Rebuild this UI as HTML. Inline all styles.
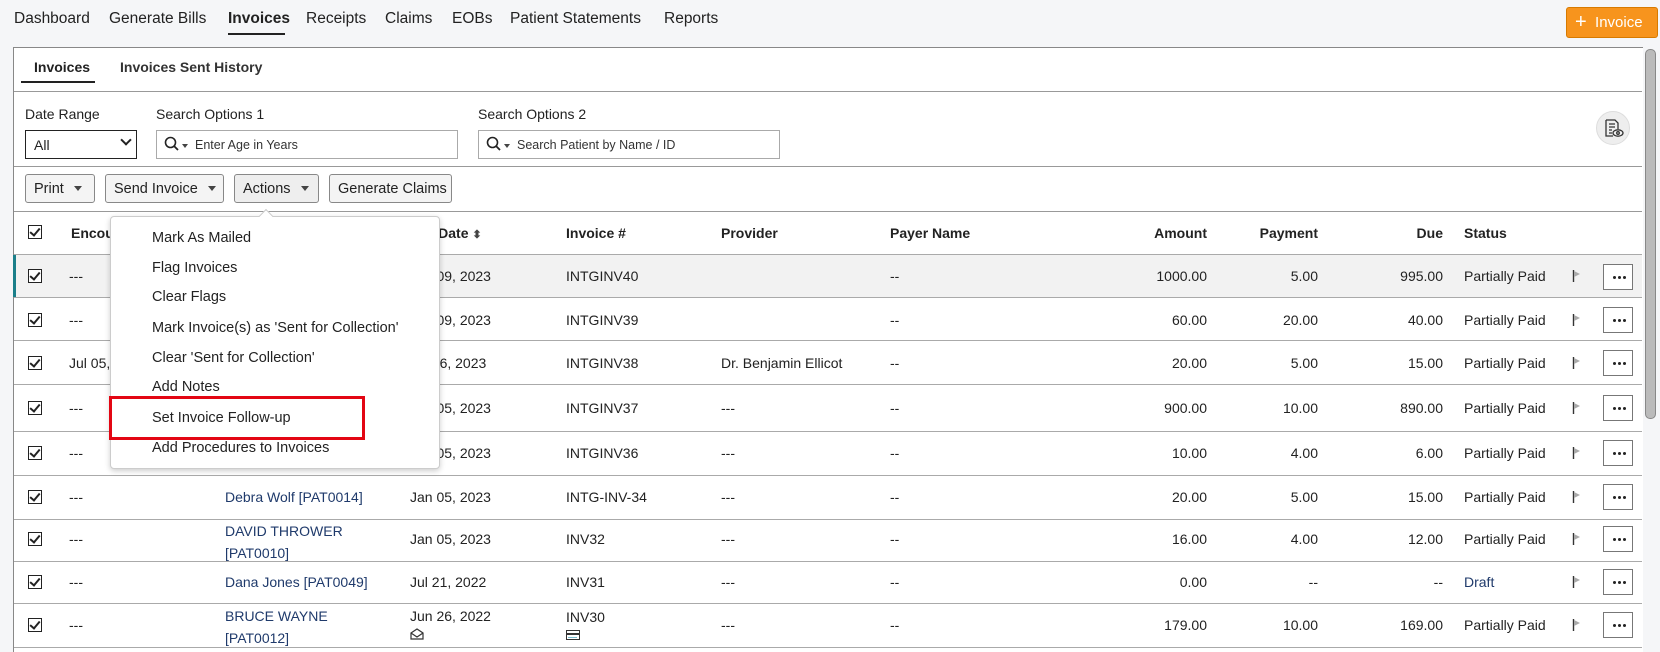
<!DOCTYPE html>
<html style="overflow:hidden;height:652px"><head><meta charset="utf-8"><style>
*{box-sizing:border-box;margin:0;padding:0}
body{width:1660px;height:652px;overflow:hidden;background:#f5f6f8;font-family:"Liberation Sans",sans-serif;font-size:14px;color:#222;position:relative}
.a{position:absolute;white-space:nowrap}
.nav{top:10px;font-size:15.5px;color:#222}
.panel{position:absolute;left:13px;top:47px;width:1630px;height:605px;background:#fff;border:1px solid #888;border-right:none;border-bottom:none}
.hl{position:absolute;left:14px;width:1628px;height:1px;background:#999}
.rl{position:absolute;left:14px;width:1628px;height:1px;background:#aaa}
.lbl{font-size:14px;color:#222;top:106px}
.inp{position:absolute;top:130px;height:29px;border:1px solid #aaa;background:#fff;font-size:12.5px;color:#333;padding:7px 0 0 38px}
.btn{position:absolute;top:174px;height:29px;border:1px solid #888;border-radius:3px;background:#f4f4f4;font-size:14.5px;padding:6px 0 0 8px;color:#222}
.car{display:inline-block;width:0;height:0;border-left:4px solid transparent;border-right:4px solid transparent;border-top:5px solid #444;margin-left:10px;vertical-align:middle;position:relative;top:-1px}
.th{top:225px;font-weight:bold;font-size:14px}
.cb{position:absolute;left:28px;width:14px;height:14px;border:1.5px solid #222;background:#fff}
.cb:after{content:"";position:absolute;left:3px;top:0px;width:4px;height:8px;border-right:2px solid #222;border-bottom:2px solid #222;transform:rotate(40deg)}
.r{text-align:right}
.lnk{color:#1f3a6b}
.flag{position:absolute;left:1572px;width:10px;height:12px}
.dots{position:absolute;left:1603px;width:30px;height:26px;border:1px solid #777;background:#fff}
.dots:before{content:"";position:absolute;left:9px;top:11px;width:3px;height:3px;border-radius:50%;background:#222;box-shadow:5px 0 0 #222,10px 0 0 #222}
.menu{position:absolute;left:110px;top:216px;width:330px;height:253px;background:#fff;border:1px solid #ccc;border-radius:4px;box-shadow:0 2px 6px rgba(0,0,0,.2)}
.mi{position:absolute;left:41px;font-size:14.5px;color:#222}
</style></head><body>
<div class="a nav" style="left:14px">Dashboard</div>
<div class="a nav" style="left:109px">Generate Bills</div>
<div class="a nav" style="left:228px;font-weight:bold">Invoices</div>
<div class="a" style="left:228px;top:33px;width:57px;height:2px;background:#222"></div>
<div class="a nav" style="left:306px">Receipts</div>
<div class="a nav" style="left:385px">Claims</div>
<div class="a nav" style="left:452px">EOBs</div>
<div class="a nav" style="left:510px">Patient Statements</div>
<div class="a nav" style="left:664px">Reports</div>
<div class="a" style="left:1566px;top:7px;width:92px;height:31px;background:#f7941d;border:1px solid #d77a00;border-radius:3px;color:#fff;font-size:15px;padding:6px 0 0 8px"><span style="font-size:20px;line-height:14px;position:relative;top:1px">+</span>&nbsp; Invoice</div>

<div class="panel"></div>
<div class="a" style="left:1645px;top:49px;width:11px;height:370px;background:#bbb;border:1px solid #888;border-radius:5px"></div>
<div class="a" style="left:34px;top:59px;font-weight:bold;font-size:14px">Invoices</div>
<div class="a" style="left:21px;top:81px;width:74px;height:2px;background:#222"></div>
<div class="a" style="left:120px;top:59px;font-weight:bold;font-size:14px;color:#333">Invoices Sent History</div>
<div class="hl" style="top:91px"></div>

<div class="a lbl" style="left:25px">Date Range</div>
<div class="a lbl" style="left:156px">Search Options 1</div>
<div class="a lbl" style="left:478px">Search Options 2</div>
<div class="a" style="left:25px;top:130px;width:112px;height:29px;border:1.5px solid #222;background:#fff;font-size:14px;padding:6px 0 0 8px">All</div>
<div class="a" style="left:122px;top:136px;width:8px;height:8px;border-right:2px solid #222;border-bottom:2px solid #222;transform:rotate(45deg)"></div>
<div class="inp" style="left:156px;width:302px">Enter Age in Years</div>
<div class="inp" style="left:478px;width:302px">Search Patient by Name / ID</div>
<svg class="a" style="left:164px;top:136px" width="28" height="16"><circle cx="6.5" cy="6.5" r="5" fill="none" stroke="#222" stroke-width="1.6"/><path d="M10 10l4 4" stroke="#222" stroke-width="1.8"/><path d="M18 8h6l-3 4z" fill="#444"/></svg>
<svg class="a" style="left:486px;top:136px" width="28" height="16"><circle cx="6.5" cy="6.5" r="5" fill="none" stroke="#222" stroke-width="1.6"/><path d="M10 10l4 4" stroke="#222" stroke-width="1.8"/><path d="M18 8h6l-3 4z" fill="#444"/></svg>
<div class="a" style="left:1596px;top:111px;width:34px;height:34px;border-radius:50%;background:#eee;border:1px solid #ddd"></div>
<svg class="a" style="left:1603px;top:118px" width="22" height="22" fill="none" stroke="#333" stroke-width="1.3"><path d="M3 2h9l3 3v6M3 2v16h7"/><path d="M6 6h6M6 9h6M6 12h3M6 15h3"/><ellipse cx="15" cy="15" rx="5" ry="3.2"/><circle cx="15" cy="15" r="1.3"/></svg>
<div class="hl" style="top:166px"></div>

<div class="btn" style="left:25px;width:70px">Print<span class="car"></span></div>
<div class="btn" style="left:105px;width:119px">Send Invoice<span class="car"></span></div>
<div class="btn" style="left:234px;width:85px;background:#eee">Actions<span class="car"></span></div>
<div class="btn" style="left:329px;width:123px">Generate Claims</div>
<div class="hl" style="top:211px"></div>

<div class="cb" style="top:225px"></div>
<div class="a th" style="left:71px">Encounter</div>
<div class="a th" style="left:386px">Invoice Date <span style="font-size:11px;color:#444">&#x2B0D;</span></div>
<div class="a th" style="left:566px">Invoice #</div>
<div class="a th" style="left:721px">Provider</div>
<div class="a th" style="left:890px">Payer Name</div>
<div class="a th r" style="left:1100px;width:107px">Amount</div>
<div class="a th r" style="left:1200px;width:118px">Payment</div>
<div class="a th r" style="left:1350px;width:93px">Due</div>
<div class="a th" style="left:1464px">Status</div>
<div class="rl" style="top:254px"></div>

<div class="a" style="left:14px;top:255px;width:1628px;height:42px;background:#f2f2f2"></div>
<div class="a" style="left:13px;top:255px;width:3px;height:42px;background:#1b7f8a"></div>
<div class="rl" style="top:297px"></div><div class="rl" style="top:340px"></div><div class="rl" style="top:384px"></div><div class="rl" style="top:431px"></div><div class="rl" style="top:475px"></div><div class="rl" style="top:519px"></div><div class="rl" style="top:561px"></div><div class="rl" style="top:603px"></div><div class="rl" style="top:647px"></div>

<div class="cb" style="top:269px"></div><div class="a" style="left:69px;top:268px">---</div><div class="a" style="left:410px;top:268px">Jan 09, 2023</div><div class="a" style="left:566px;top:268px">INTGINV40</div><div class="a" style="left:890px;top:268px">--</div><div class="a r" style="left:1100px;width:107px;top:268px">1000.00</div><div class="a r" style="left:1200px;width:118px;top:268px">5.00</div><div class="a r" style="left:1350px;width:93px;top:268px">995.00</div><div class="a" style="left:1464px;top:268px">Partially Paid</div>
<div class="cb" style="top:313px"></div><div class="a" style="left:69px;top:312px">---</div><div class="a" style="left:410px;top:312px">Jan 09, 2023</div><div class="a" style="left:566px;top:312px">INTGINV39</div><div class="a" style="left:890px;top:312px">--</div><div class="a r" style="left:1100px;width:107px;top:312px">60.00</div><div class="a r" style="left:1200px;width:118px;top:312px">20.00</div><div class="a r" style="left:1350px;width:93px;top:312px">40.00</div><div class="a" style="left:1464px;top:312px">Partially Paid</div>
<div class="cb" style="top:356px"></div><div class="a" style="left:69px;top:355px">Jul 05, 2023</div><div class="a" style="left:410px;top:355px">Jul 06, 2023</div><div class="a" style="left:566px;top:355px">INTGINV38</div><div class="a" style="left:721px;top:355px">Dr. Benjamin Ellicot</div><div class="a" style="left:890px;top:355px">--</div><div class="a r" style="left:1100px;width:107px;top:355px">20.00</div><div class="a r" style="left:1200px;width:118px;top:355px">5.00</div><div class="a r" style="left:1350px;width:93px;top:355px">15.00</div><div class="a" style="left:1464px;top:355px">Partially Paid</div>
<div class="cb" style="top:401px"></div><div class="a" style="left:69px;top:400px">---</div><div class="a" style="left:410px;top:400px">Jan 05, 2023</div><div class="a" style="left:566px;top:400px">INTGINV37</div><div class="a" style="left:721px;top:400px">---</div><div class="a" style="left:890px;top:400px">--</div><div class="a r" style="left:1100px;width:107px;top:400px">900.00</div><div class="a r" style="left:1200px;width:118px;top:400px">10.00</div><div class="a r" style="left:1350px;width:93px;top:400px">890.00</div><div class="a" style="left:1464px;top:400px">Partially Paid</div>
<div class="cb" style="top:446px"></div><div class="a" style="left:69px;top:445px">---</div><div class="a" style="left:410px;top:445px">Jan 05, 2023</div><div class="a" style="left:566px;top:445px">INTGINV36</div><div class="a" style="left:721px;top:445px">---</div><div class="a" style="left:890px;top:445px">--</div><div class="a r" style="left:1100px;width:107px;top:445px">10.00</div><div class="a r" style="left:1200px;width:118px;top:445px">4.00</div><div class="a r" style="left:1350px;width:93px;top:445px">6.00</div><div class="a" style="left:1464px;top:445px">Partially Paid</div>
<div class="cb" style="top:490px"></div><div class="a" style="left:69px;top:489px">---</div><div class="a lnk" style="left:225px;top:489px">Debra Wolf [PAT0014]</div><div class="a" style="left:410px;top:489px">Jan 05, 2023</div><div class="a" style="left:566px;top:489px">INTG-INV-34</div><div class="a" style="left:721px;top:489px">---</div><div class="a" style="left:890px;top:489px">--</div><div class="a r" style="left:1100px;width:107px;top:489px">20.00</div><div class="a r" style="left:1200px;width:118px;top:489px">5.00</div><div class="a r" style="left:1350px;width:93px;top:489px">15.00</div><div class="a" style="left:1464px;top:489px">Partially Paid</div>
<div class="cb" style="top:532px"></div><div class="a" style="left:69px;top:531px">---</div><div class="a lnk" style="left:225px;top:519px;line-height:22px;padding-top:1px">DAVID THROWER<br>[PAT0010]</div><div class="a" style="left:410px;top:531px">Jan 05, 2023</div><div class="a" style="left:566px;top:531px">INV32</div><div class="a" style="left:721px;top:531px">---</div><div class="a" style="left:890px;top:531px">--</div><div class="a r" style="left:1100px;width:107px;top:531px">16.00</div><div class="a r" style="left:1200px;width:118px;top:531px">4.00</div><div class="a r" style="left:1350px;width:93px;top:531px">12.00</div><div class="a" style="left:1464px;top:531px">Partially Paid</div>
<div class="cb" style="top:575px"></div><div class="a" style="left:69px;top:574px">---</div><div class="a lnk" style="left:225px;top:574px">Dana Jones [PAT0049]</div><div class="a" style="left:410px;top:574px">Jul 21, 2022</div><div class="a" style="left:566px;top:574px">INV31</div><div class="a" style="left:721px;top:574px">---</div><div class="a" style="left:890px;top:574px">--</div><div class="a r" style="left:1100px;width:107px;top:574px">0.00</div><div class="a r" style="left:1200px;width:118px;top:574px">--</div><div class="a r" style="left:1350px;width:93px;top:574px">--</div><div class="a lnk" style="left:1464px;top:574px">Draft</div>
<div class="cb" style="top:618px"></div><div class="a" style="left:69px;top:617px">---</div><div class="a lnk" style="left:225px;top:604px;line-height:22px;padding-top:1px">BRUCE WAYNE<br>[PAT0012]</div><div class="a" style="left:410px;top:608px">Jun 26, 2022</div><div class="a" style="left:566px;top:609px">INV30</div><div class="a" style="left:721px;top:617px">---</div><div class="a" style="left:890px;top:617px">--</div><div class="a r" style="left:1100px;width:107px;top:617px">179.00</div><div class="a r" style="left:1200px;width:118px;top:617px">10.00</div><div class="a r" style="left:1350px;width:93px;top:617px">169.00</div><div class="a" style="left:1464px;top:617px">Partially Paid</div>
<svg class="a" style="left:410px;top:628px" width="14" height="12" fill="none" stroke="#333" stroke-width="1.2"><path d="M1 5l6-4 6 4v6H1z M1 5l6 4 6-4"/></svg>
<svg class="a" style="left:566px;top:630px" width="14" height="10"><rect x="0.5" y="0.5" width="13" height="9" fill="none" stroke="#333"/><rect x="1" y="3" width="12" height="2" fill="#333"/><rect x="2" y="7" width="9" height="1" fill="#7bc"/></svg>

<svg class="flag" style="top:270px" viewBox="0 0 10 12"><path d="M1.5 0v12" stroke="#333" stroke-width="1.4"/><path d="M2 1l6 3-6 3z" fill="#aaa"/></svg><div class="dots" style="top:264px"></div>
<svg class="flag" style="top:314px" viewBox="0 0 10 12"><path d="M1.5 0v12" stroke="#333" stroke-width="1.4"/><path d="M2 1l6 3-6 3z" fill="#aaa"/></svg><div class="dots" style="top:307px"></div>
<svg class="flag" style="top:357px" viewBox="0 0 10 12"><path d="M1.5 0v12" stroke="#333" stroke-width="1.4"/><path d="M2 1l6 3-6 3z" fill="#aaa"/></svg><div class="dots" style="top:350px"></div>
<svg class="flag" style="top:402px" viewBox="0 0 10 12"><path d="M1.5 0v12" stroke="#333" stroke-width="1.4"/><path d="M2 1l6 3-6 3z" fill="#aaa"/></svg><div class="dots" style="top:395px"></div>
<svg class="flag" style="top:447px" viewBox="0 0 10 12"><path d="M1.5 0v12" stroke="#333" stroke-width="1.4"/><path d="M2 1l6 3-6 3z" fill="#aaa"/></svg><div class="dots" style="top:440px"></div>
<svg class="flag" style="top:491px" viewBox="0 0 10 12"><path d="M1.5 0v12" stroke="#333" stroke-width="1.4"/><path d="M2 1l6 3-6 3z" fill="#aaa"/></svg><div class="dots" style="top:484px"></div>
<svg class="flag" style="top:533px" viewBox="0 0 10 12"><path d="M1.5 0v12" stroke="#333" stroke-width="1.4"/><path d="M2 1l6 3-6 3z" fill="#aaa"/></svg><div class="dots" style="top:526px"></div>
<svg class="flag" style="top:576px" viewBox="0 0 10 12"><path d="M1.5 0v12" stroke="#333" stroke-width="1.4"/><path d="M2 1l6 3-6 3z" fill="#aaa"/></svg><div class="dots" style="top:569px"></div>
<svg class="flag" style="top:619px" viewBox="0 0 10 12"><path d="M1.5 0v12" stroke="#333" stroke-width="1.4"/><path d="M2 1l6 3-6 3z" fill="#aaa"/></svg><div class="dots" style="top:612px"></div>

<div class="menu">
<div class="a" style="left:150px;top:-6px;width:10px;height:10px;background:#fff;border-left:1px solid #ccc;border-top:1px solid #ccc;transform:rotate(45deg)"></div>
<div class="mi" style="top:13px">Mark As Mailed</div>
<div class="mi" style="top:43px">Flag Invoices</div>
<div class="mi" style="top:72px">Clear Flags</div>
<div class="mi" style="top:103px">Mark Invoice(s) as 'Sent for Collection'</div>
<div class="mi" style="top:133px">Clear 'Sent for Collection'</div>
<div class="mi" style="top:162px">Add Notes</div>
<div class="mi" style="top:193px">Set Invoice Follow-up</div>
<div class="mi" style="top:223px">Add Procedures to Invoices</div>
</div>
<div class="a" style="left:109px;top:396px;width:256px;height:44px;border:3px solid #e30613"></div>
</body></html>
